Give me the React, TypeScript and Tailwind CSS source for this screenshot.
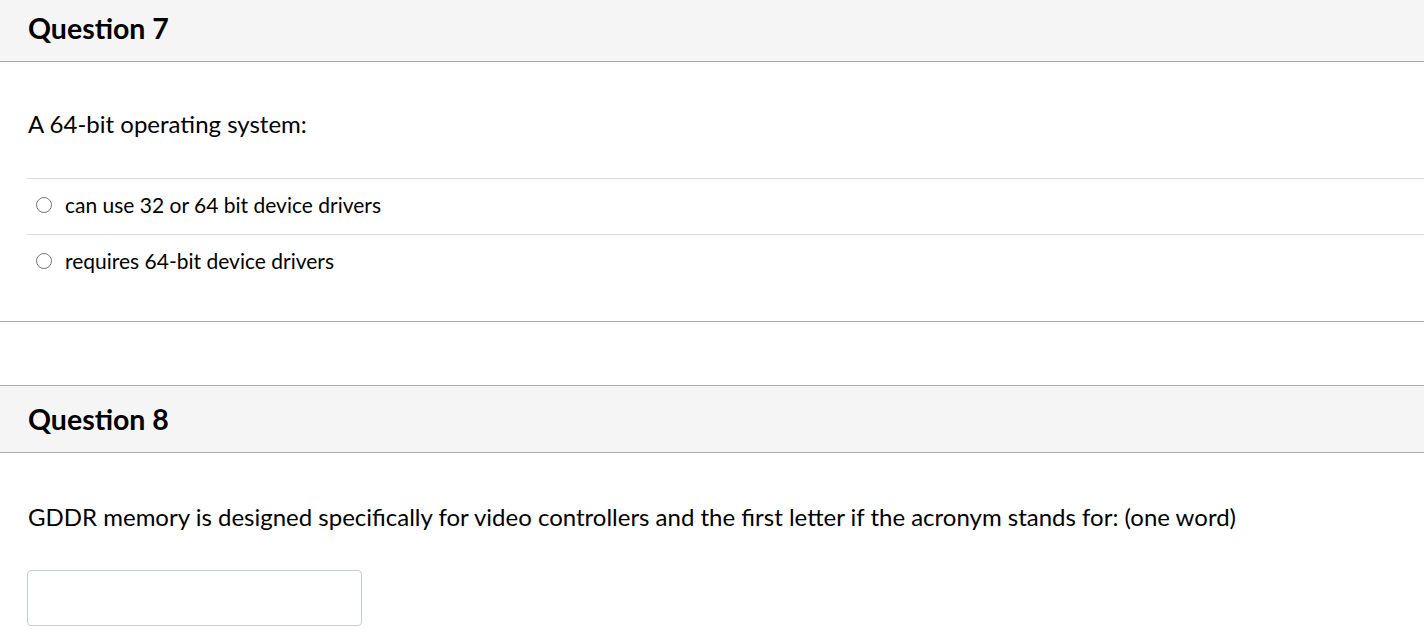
export default function App() {
  const answers = ['can use 32 or 64 bit device drivers', 'requires 64-bit device drivers'];

  return (
    <div className="h-[630px] w-[1424px] overflow-hidden bg-white text-black" style={{ fontFamily: 'Lato, "Noto Sans", sans-serif' }}>
      {/* Question 7 */}
      <div className="-mt-[5px] border-b border-[#a8a8a8]">
        <div className="flex h-[67px] items-center border-b border-[#a8a8a8] bg-[#f5f5f5] pl-[28px]">
          <h2 className="text-[28.5px] font-bold">Question 7</h2>
        </div>
        <div className="pl-[27px]">
          <div className="flex h-[116px] items-center pl-px pt-[8px] text-[24px]">A 64-bit operating system:</div>
          <div>
            {answers.map((a) => (
              <label key={a} className="flex h-[56px] items-center border-t border-[#dcdcdc] pb-[3px] text-[21px]">
                <span className="ml-[9px] mr-[13px] h-[16px] w-[16px] shrink-0 rounded-full border border-[#7a7a7a]" />
                {a}
              </label>
            ))}
          </div>
          <div className="h-[31px]" />
        </div>
      </div>

      <div className="h-[63px]" />

      {/* Question 8 */}
      <div className="border-t border-[#a8a8a8]">
        <div className="flex h-[67px] items-center border-b border-[#a8a8a8] bg-[#f5f5f5] pl-[28px]">
          <h2 className="text-[28.5px] font-bold">Question 8</h2>
        </div>
        <div className="pl-[27px]">
          <div className="flex h-[117px] items-center pl-px pt-[10px] text-[24px]">
            GDDR memory is designed specifically for video controllers and the first letter if the acronym stands for: (one word)
          </div>
          <input
            type="text"
            className="h-[56px] w-[335px] rounded-[4px] border border-[#c7cdd1] bg-white px-3 outline-none"
          />
        </div>
      </div>
    </div>
  );
}
